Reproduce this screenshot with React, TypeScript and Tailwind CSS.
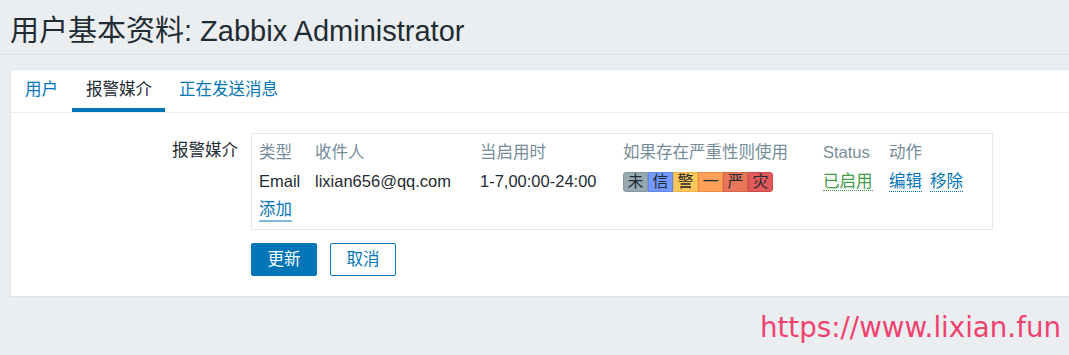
import React from 'react';

const FONT = { fontFamily: '"Liberation Sans", "Noto Sans CJK SC", sans-serif' };

const severities = [
  { label: '未', bg: 'bg-[#97aab3]', border: 'border-[#8597a0]' },
  { label: '信', bg: 'bg-[#7499ff]', border: 'border-[#6287ee]' },
  { label: '警', bg: 'bg-[#ffc859]', border: 'border-[#eab44a]' },
  { label: '一', bg: 'bg-[#ffa059]', border: 'border-[#ea8c48]' },
  { label: '严', bg: 'bg-[#e97659]', border: 'border-[#d46449]' },
  { label: '灾', bg: 'bg-[#e45959]', border: 'border-[#cc4848]' },
];

const App = () => {
  return (
    <div className="min-h-[355px] w-[1069px] overflow-hidden bg-[#ebeef0] text-[16.5px] text-[#1f2c33]" style={FONT}>
      {/* page title */}
      <div className="flex h-[55px] items-center border-b border-[#dde2e5] pl-[10px] pt-[8px]">
        <h1 className="text-[29px] font-normal leading-none text-[#1f2c33]">用户基本资料: Zabbix Administrator</h1>
      </div>

      {/* panel */}
      <div className="ml-[10px] mt-[14px] w-[1080px] border border-[#dfe4e7] bg-white">
        <div className="flex h-[43px] border-b border-[#ebeef0] pl-0">
          <div className="flex h-[42px] items-center px-[14px] pb-[4px] text-[#0275b8]">用户</div>
          <div className="flex h-[42px] items-center border-b-4 border-[#0275b8] pl-[14px] pr-[13px] text-[#1f2c33]">报警媒介</div>
          <div className="flex h-[42px] items-center px-[14px] pb-[4px] text-[#0275b8]">正在发送消息</div>
        </div>

        <div className="grid grid-cols-[227px_742px] gap-x-[13px] pb-[20px] pt-[20px]">
          <div className="pt-[5px] text-right leading-[24px]">报警媒介</div>
          <div className="border border-[#e6e9eb] px-[7px] py-[4px]">
            <div className="grid h-[29px] grid-cols-[56px_165px_143px_200px_66px_1fr] items-center text-[#768d99]">
              <span>类型</span>
              <span>收件人</span>
              <span>当启用时</span>
              <span>如果存在严重性则使用</span>
              <span>Status</span>
              <span>动作</span>
            </div>
            <div className="grid h-[29px] grid-cols-[56px_165px_143px_200px_66px_1fr] items-center">
              <span>Email</span>
              <span>lixian656@qq.com</span>
              <span>1-7,00:00-24:00</span>
              <div className="flex">
                {severities.map((s, i) => (
                  <span
                    key={s.label}
                    className={`flex h-[20px] w-[25px] items-center justify-center border text-[16px] leading-none ${s.bg} ${s.border} ${i === 0 ? 'rounded-l-[3px]' : ''} ${i === severities.length - 1 ? 'rounded-r-[3px]' : ''}`}
                  >
                    {s.label}
                  </span>
                ))}
              </div>
              <span>
                <span className="border-b border-dotted border-[#429e47] leading-[20px] text-[#429e47]">已启用</span>
              </span>
              <span className="flex gap-[8px]">
                <span className="border-b border-dotted border-[#0275b8] leading-[20px] text-[#0275b8]">编辑</span>
                <span className="border-b border-dotted border-[#0275b8] leading-[20px] text-[#0275b8]">移除</span>
              </span>
            </div>
            <div className="flex h-[29px] items-center">
              <span className="border-b-2 border-[#80badb] leading-[21px] text-[#0275b8]">添加</span>
            </div>
          </div>

          <div />
          <div className="mt-[13px] flex gap-[13px]">
            <button className="h-[33px] w-[66px] rounded-[2px] border border-[#0275b8] bg-[#0275b8] text-white">更新</button>
            <button className="h-[33px] w-[66px] rounded-[2px] border border-[#0275b8] bg-white text-[#0275b8]">取消</button>
          </div>
        </div>
      </div>

      <div className="mt-[17px] pr-[8px] text-right text-[27.7px] leading-none text-[#f0426f]" style={{ fontFamily: '"DejaVu Sans", sans-serif' }}>
        https://www.lixian.fun
      </div>
    </div>
  );
};

export default App;
